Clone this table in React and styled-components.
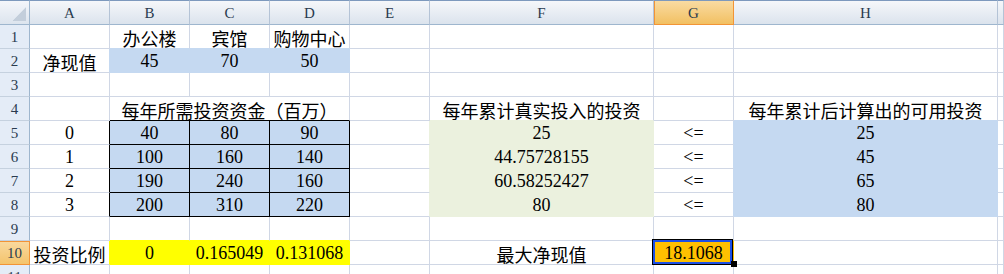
import styled, {createGlobalStyle} from 'styled-components';

const GRID = '#d0d7e5';
const BLUE = '#c5d9f1';
const GREEN = '#ebf1de';
const YELLOW = '#ffff00';
const ORANGE = '#ffc000';
const BLACK = '#000';

const columns = ['A', 'B', 'C', 'D', 'E', 'F', 'G', 'H', ''];

// one entry per column A..I, null = empty cell
const rows = [
    [null, {v: '办公楼'}, {v: '宾馆'}, {v: '购物中心'}, null, null, null, null, null],
    [{v: '净现值'}, {v: '45', fill: BLUE}, {v: '70', fill: BLUE}, {v: '50', fill: BLUE}, null, null, null, null, null],
    [null, null, null, null, null, null, null, null, null],
    [null, {v: '每年所需投资资金（百万）', span: 3}, null, {v: '每年累计真实投入的投资'}, null, {v: '每年累计后计算出的可用投资'}, null],
    [{v: '0'}, {v: '40', fill: BLUE}, {v: '80', fill: BLUE}, {v: '90', fill: BLUE}, null, {v: '25', fill: GREEN}, {v: '<='}, {v: '25', fill: BLUE}, null],
    [{v: '1'}, {v: '100', fill: BLUE}, {v: '160', fill: BLUE}, {v: '140', fill: BLUE}, null, {v: '44.75728155', fill: GREEN}, {v: '<='}, {v: '45', fill: BLUE}, null],
    [{v: '2'}, {v: '190', fill: BLUE}, {v: '240', fill: BLUE}, {v: '160', fill: BLUE}, null, {v: '60.58252427', fill: GREEN}, {v: '<='}, {v: '65', fill: BLUE}, null],
    [{v: '3'}, {v: '200', fill: BLUE}, {v: '310', fill: BLUE}, {v: '220', fill: BLUE}, null, {v: '80', fill: GREEN}, {v: '<='}, {v: '80', fill: BLUE}, null],
    [null, null, null, null, null, null, null, null, null],
    [{v: '投资比例'}, {v: '0', fill: YELLOW}, {v: '0.165049', fill: YELLOW}, {v: '0.131068', fill: YELLOW}, null, {v: '最大净现值'}, {v: '18.1068', fill: ORANGE, selected: true}, null, null],
    [null, null, null, null, null, null, null, null, null],
];

const activeRow = 10;
const activeCol = 'G';

const GlobalStyle = createGlobalStyle`
    html, body {
        margin: 0;
        padding: 0;
        background: #fff;
    }
`;

const Sheet = styled.div`
    display: grid;
    grid-template-columns: 30px 80px 80px 80px 80px 80px 224px 80px 264px 1fr;
    grid-template-rows: 25px repeat(11, 24px);
    width: 1004px;
    height: 274px;
    overflow: hidden;
    font-family: "Liberation Serif", "Noto Sans CJK SC", serif;
`;

const Corner = styled.div`
    box-sizing: border-box;
    border-top: 1px solid #7d99bd;
    border-right: 1px solid #9eb6ce;
    border-bottom: 1px solid #9eb6ce;
    background: linear-gradient(#f4f6fa, #dce4ee);
    display: flex;
    align-items: flex-end;
    justify-content: flex-end;
    padding: 0 3px 3px 0;
`;

const ColHeader = styled.div`
    box-sizing: border-box;
    display: flex;
    align-items: center;
    justify-content: center;
    border-top: 1px solid #7d99bd;
    border-right: 1px solid ${p => p.$active ? '#f29436' : '#b4c3d6'};
    border-bottom: 1px solid ${p => p.$active ? '#f29436' : '#9eb6ce'};
    box-shadow: ${p => p.$active ? 'inset 1px 0 0 #f29436' : 'none'};
    background: ${p => p.$active
        ? 'linear-gradient(#f9dba2, #f2c062)'
        : 'linear-gradient(#f5f7fa, #dbe3ed)'};
    color: #2a3b4f;
    font-size: 15px;
    padding-top: 1px;
`;

const RowHeader = styled.div`
    box-sizing: border-box;
    display: flex;
    align-items: center;
    justify-content: center;
    border-right: 1px solid ${p => p.$active ? '#f29436' : '#9eb6ce'};
    border-bottom: 1px solid ${p => p.$active ? '#f29436' : '#c5d1df'};
    box-shadow: ${p => p.$active ? 'inset 0 1px 0 #f29436' : 'none'};
    background: ${p => p.$active
        ? 'linear-gradient(#f9d9a0, #f4c46c)'
        : '#e4ecf7'};
    color: #2a3b4f;
    font-size: 15px;
    padding-top: 1px;
`;

const Cell = styled.div`
    position: relative;
    box-sizing: border-box;
    grid-column: span ${p => p.$span || 1};
    display: flex;
    align-items: center;
    justify-content: center;
    padding-top: 2px;
    border-right: 1px solid ${p => p.$rb};
    border-bottom: 1px solid ${p => p.$bb};
    background: ${p => p.$fill || '#fff'};
    color: #000;
    font-size: 18px;
    white-space: nowrap;
`;

const Selection = styled.div`
    position: absolute;
    top: -2px;
    left: -2px;
    right: 0;
    bottom: -1px;
    border: 1px solid #000;
    box-shadow: inset 0 0 0 2px #1c4fe6;
    z-index: 2;
    pointer-events: none;
`;

const FillHandle = styled.div`
    position: absolute;
    right: -4px;
    bottom: -3px;
    width: 6px;
    height: 6px;
    background: #000;
    z-index: 3;
`;

// cells with black borders: the B5:D8 table
const inTable = (r, c) => r >= 5 && r <= 8 && c >= 1 && c <= 3;

const expandRow = (cells) => {
    // turn spanned entries into a list of columns with their cell
    const out = [];
    cells.forEach(cell => {
        if (out.length >= 9) return;
        out.push(cell);
        if (cell && cell.span) {
            for (let i = 1; i < cell.span; i++) out.push({...cell, hidden: true});
        }
    });
    return out;
};

const grid = rows.map(expandRow);

const borderColors = (r, c) => {
    const cell = grid[r - 1][c];
    const right = grid[r - 1][c + 1];
    const below = grid[r] ? grid[r][c] : null;

    let rb = GRID;
    if (cell && cell.fill) rb = cell.fill;
    else if (right && right.fill) rb = right.fill;
    if (cell && cell.span) rb = GRID;
    if (inTable(r, c) || inTable(r, c + 1)) rb = BLACK;

    let bb = GRID;
    if (cell && cell.fill) bb = cell.fill;
    else if (below && below.fill) bb = below.fill;
    if (inTable(r, c) || inTable(r + 1, c)) bb = BLACK;

    return {rb, bb};
};

const CornerMark = () => (
    <svg width="14" height="14" viewBox="0 0 14 14">
        <polygon points="14,0 14,14 0,14" fill="#c3cedb"/>
        <polyline points="14,0 0,14" stroke="#dfe6ee" strokeWidth="1" fill="none"/>
    </svg>
);

const App = () => (
    <>
        <GlobalStyle/>
        <Sheet>
            <Corner><CornerMark/></Corner>
            {columns.map((col, i) => (
                <ColHeader key={i} $active={col === activeCol}>{col}</ColHeader>
            ))}
            {grid.map((cells, ri) => {
                const r = ri + 1;
                return [
                    <RowHeader key={`h${r}`} $active={r === activeRow}>{r}</RowHeader>,
                    ...cells.map((cell, c) => {
                        if (cell && cell.hidden) return null;
                        const {rb, bb} = borderColors(r, cell && cell.span ? c + cell.span - 1 : c);
                        return (
                            <Cell key={`${r}-${c}`}
                                  $span={cell && cell.span}
                                  $fill={cell && cell.fill}
                                  $rb={rb}
                                  $bb={bb}
                            >
                                {cell ? cell.v : ''}
                                {cell && cell.selected && <Selection/>}
                                {cell && cell.selected && <FillHandle/>}
                            </Cell>
                        );
                    }),
                ];
            })}
        </Sheet>
    </>
);

export default App;
